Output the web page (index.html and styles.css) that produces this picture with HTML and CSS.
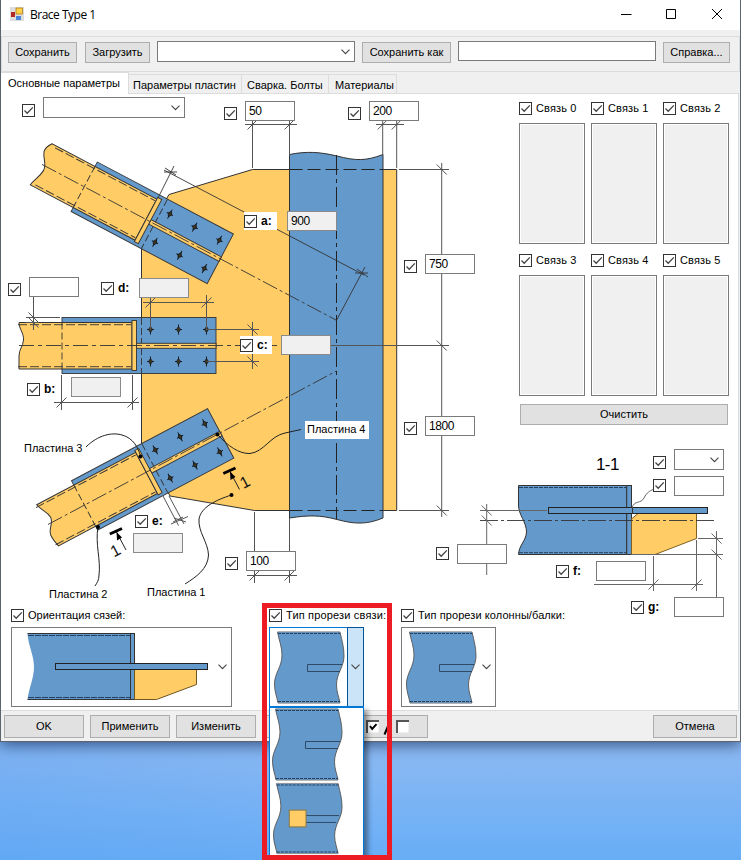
FILE: index.html
```html
<!DOCTYPE html>
<html lang="ru">
<head>
<meta charset="utf-8">
<title>Brace Type 1</title>
<link rel="stylesheet" href="styles.css">
</head>
<body>
<svg class="defs" width="0" height="0">
  <defs>
    <symbol id="check" viewBox="0 0 13 13"><rect x=".5" y=".5" width="12" height="12" fill="#fff" stroke="#333"/><path d="M2.5 6.5L5.2 9.2L10.8 3.4" fill="none" stroke="#444" stroke-width="1.3"/></symbol>
    <symbol id="chevron" viewBox="0 0 9 6"><path d="M.5 .7L4.5 4.7L8.5 .7" fill="none" stroke="#444" stroke-width="1.1"/></symbol>
    <symbol id="cut" viewBox="0 0 72 73">
      <path d="M3.500 1H66C68 10 70 16 70 25C70 36 62.500 42 62.500 54C62.500 61 65 66 66 72H4C3 66 .5 61 .5 53C.5 42 8 36 8 24C8 16 5 9 3.500 1Z" fill="#6499cb"/>
      <path d="M66 1C68 10 70 16 70 25C70 36 62.500 42 62.500 54C62.500 61 65 66 66 72M4 72C3 66 .5 61 .5 53C.5 42 8 36 8 24C8 16 5 9 3.500 1" fill="none" stroke="#555" stroke-width=".9"/>
      <path d="M3.500 .8H66M4 72.200H66" stroke="#777" stroke-width=".8"/>
      <path d="M4 2.500H66M4 70.500H66" stroke="#24405c" stroke-dasharray="3 1"/>
    </symbol>
    <g id="tick"><path d="M-5 5L5 -5"/></g>
    <g id="tock"><path d="M-5 -5L5 5"/></g>
    <g id="bolt"><path d="M-3.500 0H3.500M0 -5V5" stroke="#111" stroke-width=".9"/><path d="M0 -3L2 0L0 3L-2 0Z" fill="#3b3524" stroke="#111" stroke-width=".7"/></g>
    <g id="plate" fill="none" stroke="#333" stroke-width=".9">
      <rect x="62" y="317.500" width="154" height="56" fill="#6499cb"/>
    </g>
    <g id="fit" fill="none" stroke="#333" stroke-width=".9">
      <path d="M62 322.500V369M141.500 318V373" stroke-dasharray="7 3"/>
      <rect x="136.500" y="343.300" width="79.500" height="5" fill="#ffcc66"/>
      <rect x="132" y="320.500" width="4.500" height="50" fill="#ffcc66"/>
      <path d="M18 324.700H131M18 366.700H131" stroke-dasharray="9 3"/>
      <use href="#bolt" x="150.500" y="329.500"/><use href="#bolt" x="178.500" y="329.500"/><use href="#bolt" x="206.500" y="329.500"/>
      <use href="#bolt" x="150.500" y="361.500"/><use href="#bolt" x="178.500" y="361.500"/><use href="#bolt" x="206.500" y="361.500"/>
    </g>
  </defs>
</svg>

<main class="window">
  <header class="titlebar">
    <svg class="app-icon" viewBox="0 0 14 14"><rect width="14" height="14" fill="#ddd"/><rect x="1" y="5" width="4" height="5" fill="#b32a22"/><rect x="6" y="1" width="6.500" height="6" fill="#ffd24a" stroke="#a86f00" stroke-width=".7"/><rect x="6" y="9" width="5" height="4" fill="#4b86dd"/></svg>
    <span class="caption">Brace Type 1</span>
    <svg class="window-buttons" viewBox="0 0 104 12"><path d="M0 6.500H10.500M45.500 1.500H54.500V10.500H45.500ZM91 1L101 11M101 1L91 11" fill="none" stroke="#000"/></svg>
  </header>

  <div class="toolbar">
    <button class="btn w69">Сохранить</button>
    <button class="btn w65">Загрузить</button>
    <div class="combo preset"><svg class="chevron"><use href="#chevron"/></svg></div>
    <button class="btn w89">Сохранить как</button>
    <div class="field name"></div>
    <button class="btn w67">Справка...</button>
  </div>

  <nav class="tabs">
    <span class="tab active">Основные параметры</span>
    <span class="tab t2">Параметры пластин</span>
    <span class="tab t3">Сварка. Болты</span>
    <span class="tab t4">Материалы</span>
  </nav>

  <section class="page">
    <div class="canvas">
      <svg class="drawing" viewBox="0 94 738 530" fill="none" stroke="#333" stroke-width="1">
        <path d="M252.500 169.500H396.700V510.500H254.500L170 496L163 483L141.500 443V247L163 205L169 194.500Z" fill="#ffcc66"/>
        <path d="M289.500 154.500C307 151 320 152 337 156C356 161 366 161 383 154.500V518C366 525 354 524 337 519.500C320 515 309 515 289.500 518Z" fill="#6499cb"/>
        <path d="M289.500 169.500H383M289.500 510.500H383" stroke="#222" stroke-dasharray="13 5"/>
        <path d="M336.500 155V519" stroke="#222" stroke-dasharray="20 4 4 4"/>

        <g transform="translate(97.300 162) rotate(27.900) translate(-62 -317.500)">
          <use href="#plate"/>
          <path d="M132 322.500H13.500C11 326 9 329 10 333C12 340 18 342 18.500 350C18 358 14 363 13.500 369H132Z" fill="#ffcc66"/>
          <use href="#fit"/>
        </g>
        <g transform="translate(71.500 480.700) rotate(-27.900) translate(-62 -317.500)">
          <use href="#plate"/>
          <path d="M132 322.500H20C21 329 26 333 26.500 340C26 347 19 349 18.200 356C18 361 19 365 20 369H132Z" fill="#ffcc66"/>
          <use href="#fit"/>
        </g>
        <use href="#plate"/>
        <path d="M132 322.500H19C19 329 24 333 23.500 340C23 347 19 349 19 356V369H132Z" fill="#ffcc66"/>
        <use href="#fit"/>

        <g stroke="#333" stroke-width=".9">
          <path d="M42 164.400L336.500 320.300" stroke-dasharray="16 3 3 3"/>
          <path d="M48 524.500L336.500 371" stroke-dasharray="16 3 3 3"/>
          <path d="M19 345.500H290" stroke-dasharray="15 4 4 4"/>
          <path d="M158 198L174 166M164 170L364 275M336.500 320.300L365 267"/>
          <path d="M164 172H177M165 168L176 175M355 273L368 273M357 269L368 277"/>
        </g>

        <g stroke="#555">
          <path d="M245 124.500H297M252.500 121V168M289.500 121V154M376 124.500H404M382.700 121V155M396.700 121V168"/>
          <path d="M399 169.500H449M399 510.500H449M330 345.500H449M441.700 163V517"/>
          <path d="M247 575.500H297M254.500 512V583M289.500 518V583"/>
          <path d="M143 302.500H214M150.500 298V330M206.500 295V330M207 329.500H259M207 361.500H259M252.500 322V369"/>
          <path d="M33.500 296V330M26 317.500H60M26 322.500H39M54 402.500H139M61.500 375V410M132.500 375V410"/>
          <path d="M163 496L178.500 525.500M169 496L184 524M171 524L188 516.500M174 518L186 522M173 522L183 517"/>
          <use href="#tick" x="252.500" y="124.500"/><use href="#tick" x="289.500" y="124.500"/><use href="#tick" x="382.700" y="124.500"/><use href="#tick" x="396.700" y="124.500"/>
          <use href="#tock" x="441.700" y="169.500"/><use href="#tock" x="441.700" y="345.500"/><use href="#tock" x="441.700" y="510.500"/>
          <use href="#tick" x="254.500" y="575.500"/><use href="#tick" x="289.500" y="575.500"/><use href="#tick" x="150.500" y="302.500"/><use href="#tick" x="206.500" y="302.500"/>
          <use href="#tock" x="252.500" y="329.500"/><use href="#tock" x="252.500" y="361.500"/><use href="#tock" x="33.500" y="317.500"/><use href="#tock" x="33.500" y="322.500"/>
          <use href="#tick" x="61.500" y="402.500"/><use href="#tick" x="132.500" y="402.500"/>
        </g>

        <g stroke="#222">
          <path d="M86 447C98 435 112 432 122 435C133 438 138 447 140.500 456"/>
          <path d="M217.500 434.500C228 446 239 454 250 453.500C264 452 270 436 285 433L301 429.500"/>
          <path d="M231.500 495C216 500 201 507 199 519C198 532 208 542 208.500 555C208 569 196 577 185 584"/>
          <path d="M98 527C95 544 101 560 99 575C99 580 97 583 95 586"/>
        </g>
        <g fill="#000" stroke="none"><circle cx="140.500" cy="456.500" r="2"/><circle cx="217.500" cy="434.500" r="2"/><circle cx="231.500" cy="495" r="2"/><circle cx="98" cy="527" r="2"/></g>
        <g id="cut-mark"><path d="M223.300 473.500L235.500 468" stroke="#000" stroke-width="3"/><path d="M239.500 489.500L230 471.500" stroke="#222"/><path d="M230 471.500L235.500 477L230.500 480Z" fill="#000" stroke="none"/></g>
        <use href="#cut-mark" x="-113.500" y="60.500"/>
        <g class="cut-number" stroke="none"><text transform="translate(243.500 489) rotate(-28)">1</text><text transform="translate(114 557.500) rotate(-28)">1</text></g>

        <path d="M626.700 485.500H518.500V505C518.500 515 526.500 522 526.500 532C526 541 519 545 518.500 554.500H626.700Z" fill="#6499cb"/>
        <rect x="626.700" y="485.500" width="4.800" height="69" fill="#6499cb"/>
        <path d="M519 487.500H626M519 552.700H626" stroke="#24405c" stroke-dasharray="4 1"/>
        <path d="M631.500 519L638 513.500H696.500V538.500L655 554.500H631.500Z" fill="#ffcc66" stroke="#806020"/>
        <rect x="548.500" y="507.500" width="159" height="6" fill="#6499cb" stroke="#222"/><path d="M632.500 508V514"/>
        <g stroke="#666">
          <path d="M480 520.500H716" stroke="#333" stroke-width=".9" stroke-dasharray="18 3 3 3"/>
          <path d="M480 510.500H547M486.700 504V575M631.500 554.500H723M698 538.500H723M716.500 531V597M653.500 556V591M696.500 540V591M594 584.500H703"/>
          <path d="M632 508C634 500 641 504 644 498C647 492 650 491 653 489.500"/>
          <use href="#tock" x="486.700" y="510.500"/><use href="#tock" x="486.700" y="520.500"/><use href="#tock" x="716.500" y="538.500"/><use href="#tock" x="716.500" y="554.500"/><use href="#tick" x="653.500" y="584.500"/><use href="#tick" x="696.500" y="584.500"/>
        </g>
      </svg>

      <span class="note n1">Пластина 1</span><span class="note n2">Пластина 2</span><span class="note n3">Пластина 3</span><span class="note n4">Пластина 4</span>
      <span class="section-name">1-1</span>

      <label class="pin c-main"><svg class="cb"><use href="#check"/></svg></label><div class="pin combo f-main"><svg class="chevron"><use href="#chevron"/></svg></div>
      <label class="pin c-50"><svg class="cb"><use href="#check"/></svg></label><div class="pin field f-50">50</div>
      <label class="pin c-200"><svg class="cb"><use href="#check"/></svg></label><div class="pin field f-200">200</div>
      <label class="pin tag c-a"><svg class="cb"><use href="#check"/></svg><b>a:</b></label><div class="pin field off f-a">900</div>
      <label class="pin c-750"><svg class="cb"><use href="#check"/></svg></label><div class="pin field f-750">750</div>
      <label class="pin c-t"><svg class="cb"><use href="#check"/></svg></label><div class="pin field f-t"></div>
      <label class="pin c-d"><svg class="cb"><use href="#check"/></svg><b>d:</b></label><div class="pin field off f-d"></div>
      <label class="pin tag c-c"><svg class="cb"><use href="#check"/></svg><b>c:</b></label><div class="pin field off f-c"></div>
      <label class="pin c-b"><svg class="cb"><use href="#check"/></svg><b>b:</b></label><div class="pin field off f-b"></div>
      <label class="pin c-1800"><svg class="cb"><use href="#check"/></svg></label><div class="pin field f-1800">1800</div>
      <label class="pin c-e"><svg class="cb"><use href="#check"/></svg><b>e:</b></label><div class="pin field off f-e"></div>
      <label class="pin c-100"><svg class="cb"><use href="#check"/></svg></label><div class="pin field f-100">100</div>
      <label class="pin c-o"><svg class="cb"><use href="#check"/></svg></label><div class="pin field f-o"></div>
      <label class="pin c-f"><svg class="cb"><use href="#check"/></svg><b>f:</b></label><div class="pin field f-f"></div>
      <label class="pin c-g"><svg class="cb"><use href="#check"/></svg><b>g:</b></label><div class="pin field f-g"></div>
      <label class="pin c-s1"><svg class="cb"><use href="#check"/></svg></label><div class="pin combo f-s1"><svg class="chevron"><use href="#chevron"/></svg></div>
      <label class="pin c-s2"><svg class="cb"><use href="#check"/></svg></label><div class="pin field f-s2"></div>

      <aside class="links">
        <div class="link-grid">
          <div><label><svg class="cb"><use href="#check"/></svg>Связь 0</label><div class="list"></div></div>
          <div><label><svg class="cb"><use href="#check"/></svg>Связь 1</label><div class="list"></div></div>
          <div><label><svg class="cb"><use href="#check"/></svg>Связь 2</label><div class="list"></div></div>
          <div><label><svg class="cb"><use href="#check"/></svg>Связь 3</label><div class="list"></div></div>
          <div><label><svg class="cb"><use href="#check"/></svg>Связь 4</label><div class="list"></div></div>
          <div><label><svg class="cb"><use href="#check"/></svg>Связь 5</label><div class="list"></div></div>
        </div>
        <button class="btn clear">Очистить</button>
      </aside>
    </div>

    <div class="options">
      <div class="option o1">
        <label><svg class="cb"><use href="#check"/></svg>Ориентация сязей:</label>
        <div class="picture-combo">
          <svg class="orient" viewBox="27 632 182 69" fill="none" stroke="#333">
            <path d="M27.500 633.500H130.500V699.500H27.500C29 688 34 678 34 667C34 655 28 645 27.500 633.500Z" fill="#6499cb" stroke="none"/>
            <path d="M27.500 633.500H130.500M27.500 699.500H130.500"/>
            <path d="M28 635.500H130M28 697.500H130" stroke="#24405c" stroke-dasharray="6 1"/>
            <rect x="130.500" y="633.500" width="4" height="66" fill="#6499cb"/>
            <path d="M134.500 669.500H196.500V684.500L156.500 699.500H134.500Z" fill="#ffcc66" stroke="#705522"/>
            <rect x="55.500" y="663.500" width="152" height="6" fill="#6499cb" stroke="#222"/>
          </svg>
          <svg class="chevron"><use href="#chevron"/></svg>
        </div>
      </div>
      <div class="option o2">
        <label><svg class="cb"><use href="#check"/></svg>Тип прорези связи:</label>
        <div class="picture-combo open">
          <svg class="slot" viewBox="0 0 72 73"><use href="#cut"/><path d="M68 33.500H33.500V40.500H66" fill="none" stroke="#2e4a66"/></svg>
          <span class="drop"><svg class="chevron"><use href="#chevron"/></svg></span>
          <div class="dropdown">
            <svg class="slot" viewBox="0 0 72 73"><use href="#cut"/><path d="M68 33.500H33.500V40.500H66" fill="none" stroke="#2e4a66"/></svg>
            <svg class="slot square" viewBox="0 0 72 73"><use href="#cut"/><path d="M33 33.500H67M33 40.500H64" fill="none" stroke="#2e4a66"/><rect x="16.500" y="28" width="17" height="17" fill="#ffcc66" stroke="#8d7640"/></svg>
          </div>
        </div>
      </div>
      <div class="option o3">
        <label><svg class="cb"><use href="#check"/></svg>Тип прорези колонны/балки:</label>
        <div class="picture-combo">
          <svg class="slot" viewBox="0 0 72 73"><use href="#cut"/><path d="M68 33.500H33.500V40.500H66" fill="none" stroke="#2e4a66"/></svg>
          <svg class="chevron"><use href="#chevron"/></svg>
        </div>
      </div>
    </div>
  </section>

  <footer class="actions">
    <button class="btn">OK</button><button class="btn">Применить</button><button class="btn">Изменить</button>
    <div class="btn toggle">
      <svg viewBox="0 0 44 14"><path d="M1 13V1H13" fill="none" stroke="#555" stroke-width="2"/><rect x="2" y="2" width="10.500" height="10.500" fill="#fff"/><path d="M4 6L6.200 9L10.500 4.200" fill="none" stroke="#000" stroke-width="2"/><path d="M18.500 14.500L22.500 5" stroke="#000" stroke-width="2"/><path d="M31 13V1H43" fill="none" stroke="#555" stroke-width="2"/><rect x="32" y="2" width="10.500" height="10.500" fill="#fff"/></svg>
    </div>
    <button class="btn cancel">Отмена</button>
  </footer>
</main>
<div class="highlight"></div>
</body>
</html>
```

FILE: styles.css
```css
* { box-sizing: border-box; }
html { height: 860px; overflow: hidden; }
body {
  margin: 0; width: 741px; height: 860px; overflow: hidden; position: relative;
  font: 11px/13px "Liberation Sans", sans-serif; color: #000;
  background: linear-gradient(90deg, rgba(80,155,240,.25), rgba(80,155,240,0) 50%), linear-gradient(#8cb9f3 741px, #88b8f3 760px, #67adf6 860px);
}
.defs { position: absolute; }
.window { position: relative; width: 741px; height: 742px; display: flex; flex-direction: column; background: #f0f0f0; box-shadow: 0 3px 14px rgba(0,20,60,.6); }
.window::after { content: ""; position: absolute; inset: 0; border: 1px solid #5d646e; border-top: 0; pointer-events: none; }
.titlebar { height: 30px; background: #fff; display: flex; align-items: center; padding: 0 16px 2px 10px; }
.app-icon { width: 14px; height: 14px; }
.caption { font: 12px/16px "Open Sans", sans-serif; letter-spacing: -.5px; margin-left: 6px; padding-top: 2px; }
.window-buttons { width: 104px; height: 12px; margin-left: auto; }

.toolbar { margin: 6px 1px 0; height: 36px; border: 1px solid #dcdcdc; display: flex; align-items: flex-start; padding: 4px 0 0 6px; }
.btn { font: inherit; color: #000; height: 21px; padding: 0; border: 1px solid #adadad; background: #e1e1e1; text-align: center; white-space: nowrap; }
.toolbar .btn { margin-top: 1px; }
.w69 { width: 69px; margin-right: 8px; }
.w65 { width: 65px; margin-right: 7px; }
.w89 { width: 89px; margin-right: 7px; }
.w67 { width: 67px; }
.field, .combo { background: #fff; border: 1px solid #7a7a7a; height: 20px; }
.combo { height: 21px; display: flex; align-items: center; justify-content: flex-end; padding-right: 4px; }
.preset { width: 198px; margin-right: 7px; }
.name { width: 198px; margin-right: 7px; }
.chevron { width: 9px; height: 6px; flex: none; display: block; }

.tabs { display: flex; align-items: flex-end; height: 22px; padding-left: 1px; position: relative; margin-bottom: -1px; z-index: 1; }
.tab { height: 19px; border: 1px solid #dcdcdc; border-left: 0; border-bottom: 0; padding: 4px 0 0 4px; white-space: nowrap; margin-bottom: 1px; }
.tab.active { width: 128px; height: 22px; background: #fff; padding: 4px 0 0 7px; margin-bottom: 0; }
.t2 { width: 113px; } .t3 { width: 87px; padding-left: 5px; } .t4 { width: 68px; padding-left: 6px; }

.page { width: 738px; height: 618px; margin-left: 1px; background: #fff; border: 1px solid #dcdcdc; border-left: 0; flex: none; }
.canvas { position: relative; width: 738px; height: 509px; margin-left: -1px; }
.drawing { position: absolute; left: 0; top: 0; width: 738px; height: 530px; }
.cut-number { font: 16px "Liberation Sans", sans-serif; fill: #111; }
.cb { width: 13px; height: 13px; flex: none; display: block; }
label { display: flex; align-items: center; gap: 4px; white-space: nowrap; height: 13px; }
label b { font-size: 12px; }
.pin, .note, .section-name { position: absolute; }
.pin.field { width: 50px; padding: 2px 3px; font-size: 12px; line-height: 14px; letter-spacing: -.4px; }
.pin.off { background: #f0f0f0; border-color: #8a8a8a; }
.tag { background: #fff; height: 18px; width: 33px; }

.c-main { left: 22px; top: 10px; } .f-main { left: 43px; top: 3px; width: 142px; }
.c-50 { left: 224px; top: 13px; } .f-50 { left: 245px; top: 7px; }
.c-200 { left: 348px; top: 13px; } .f-200 { left: 369px; top: 7px; }
.c-a { left: 244px; top: 118px; } .f-a { left: 287px; top: 117px; }
.c-750 { left: 404px; top: 166px; } .f-750 { left: 425px; top: 160px; }
.c-t { left: 8px; top: 189px; } .f-t { left: 29px; top: 183px; }
.c-d { left: 101px; top: 188px; } .f-d { left: 139px; top: 184px; }
.c-c { left: 240px; top: 242px; width: 32px; } .f-c { left: 281px; top: 241px; }
.c-b { left: 27px; top: 289px; } .f-b { left: 71px; top: 283px; }
.c-1800 { left: 404px; top: 328px; } .f-1800 { left: 425px; top: 322px; }
.c-e { left: 135px; top: 421px; } .f-e { left: 133px; top: 439px; }
.c-100 { left: 225px; top: 463px; } .f-100 { left: 246px; top: 457px; }
.c-o { left: 436px; top: 453px; } .f-o { left: 457px; top: 450px; }
.c-f { left: 556px; top: 471px; } .f-f { left: 596px; top: 467px; }
.c-g { left: 631px; top: 507px; } .f-g { left: 674px; top: 503px; }
.c-s1 { left: 653px; top: 362px; } .f-s1 { left: 674px; top: 355px; width: 50px; }
.c-s2 { left: 653px; top: 385px; } .f-s2 { left: 674px; top: 382px; }
.n1 { left: 147px; top: 492px; } .n2 { left: 49px; top: 494px; } .n3 { left: 24px; top: 348px; }
.n4 { left: 305px; top: 327px; background: #fff; width: 64px; height: 18px; padding: 2px; }
.section-name { left: 596px; top: 361px; font-size: 17px; line-height: 20px; letter-spacing: -.6px; }

.links { position: relative; width: 210px; margin-left: 519px; padding-top: 8px; }
.link-grid { display: grid; grid-template-columns: repeat(3, 66px); gap: 10px 6px; }
.link-grid label { letter-spacing: .15px; }
.list { margin-top: 8px; height: 121px; background: #f0f0f0; border: 1px solid #7a7a7a; box-shadow: inset 0 0 0 1px #fff; }
.clear { display: block; width: 208px; margin: 8px 0 0 1px; }

.options { position: relative; display: flex; padding: 6px 0 0 10px; }
.o1 { width: 258px; } .o2 { width: 132px; }
.o2 label { letter-spacing: .17px; } .o3 label { letter-spacing: .08px; }
.picture-combo { position: relative; height: 80px; border: 1px solid #7a7a7a; margin-top: 5px; width: 95px; display: flex; align-items: center; padding: 0 4px; justify-content: space-between; background: #fff; }
.o1 .picture-combo { width: 221px; padding-left: 15px; }
.orient { width: 182px; height: 69px; margin-top: -1px; }
.slot { width: 72px; height: 73px; display: block; }
.open { border-color: #0078d7; padding-right: 0; }
.drop { position: absolute; right: -1px; top: -1px; width: 17px; height: 80px; background: #cce4f7; border: 1px solid #005499; display: flex; align-items: center; justify-content: center; }
.dropdown { position: absolute; z-index: 3; left: -1px; top: 78px; width: 95px; height: 160px; background: #fff; border: 1px solid #0078d7; border-top-width: 2px; padding: 0 0 0 2px; box-shadow: 4px 4px 5px rgba(0,0,0,.4); }
.square { margin-top: 1px; width: 71px; margin-left: 1px; }

.actions { display: flex; padding: 4px 4px 0; gap: 6px; }
.actions .btn { width: 80px; height: 23px; }
.actions .toggle { width: 166px; padding: 4px 0 0 103px; }
.toggle svg { width: 44px; height: 14px; display: block; overflow: visible; }
.actions .cancel { width: 84px; margin-left: auto; }
.highlight { position: absolute; left: 262px; top: 603px; width: 130px; height: 257px; border: 5px solid #ed1c24; z-index: 5; }
```
